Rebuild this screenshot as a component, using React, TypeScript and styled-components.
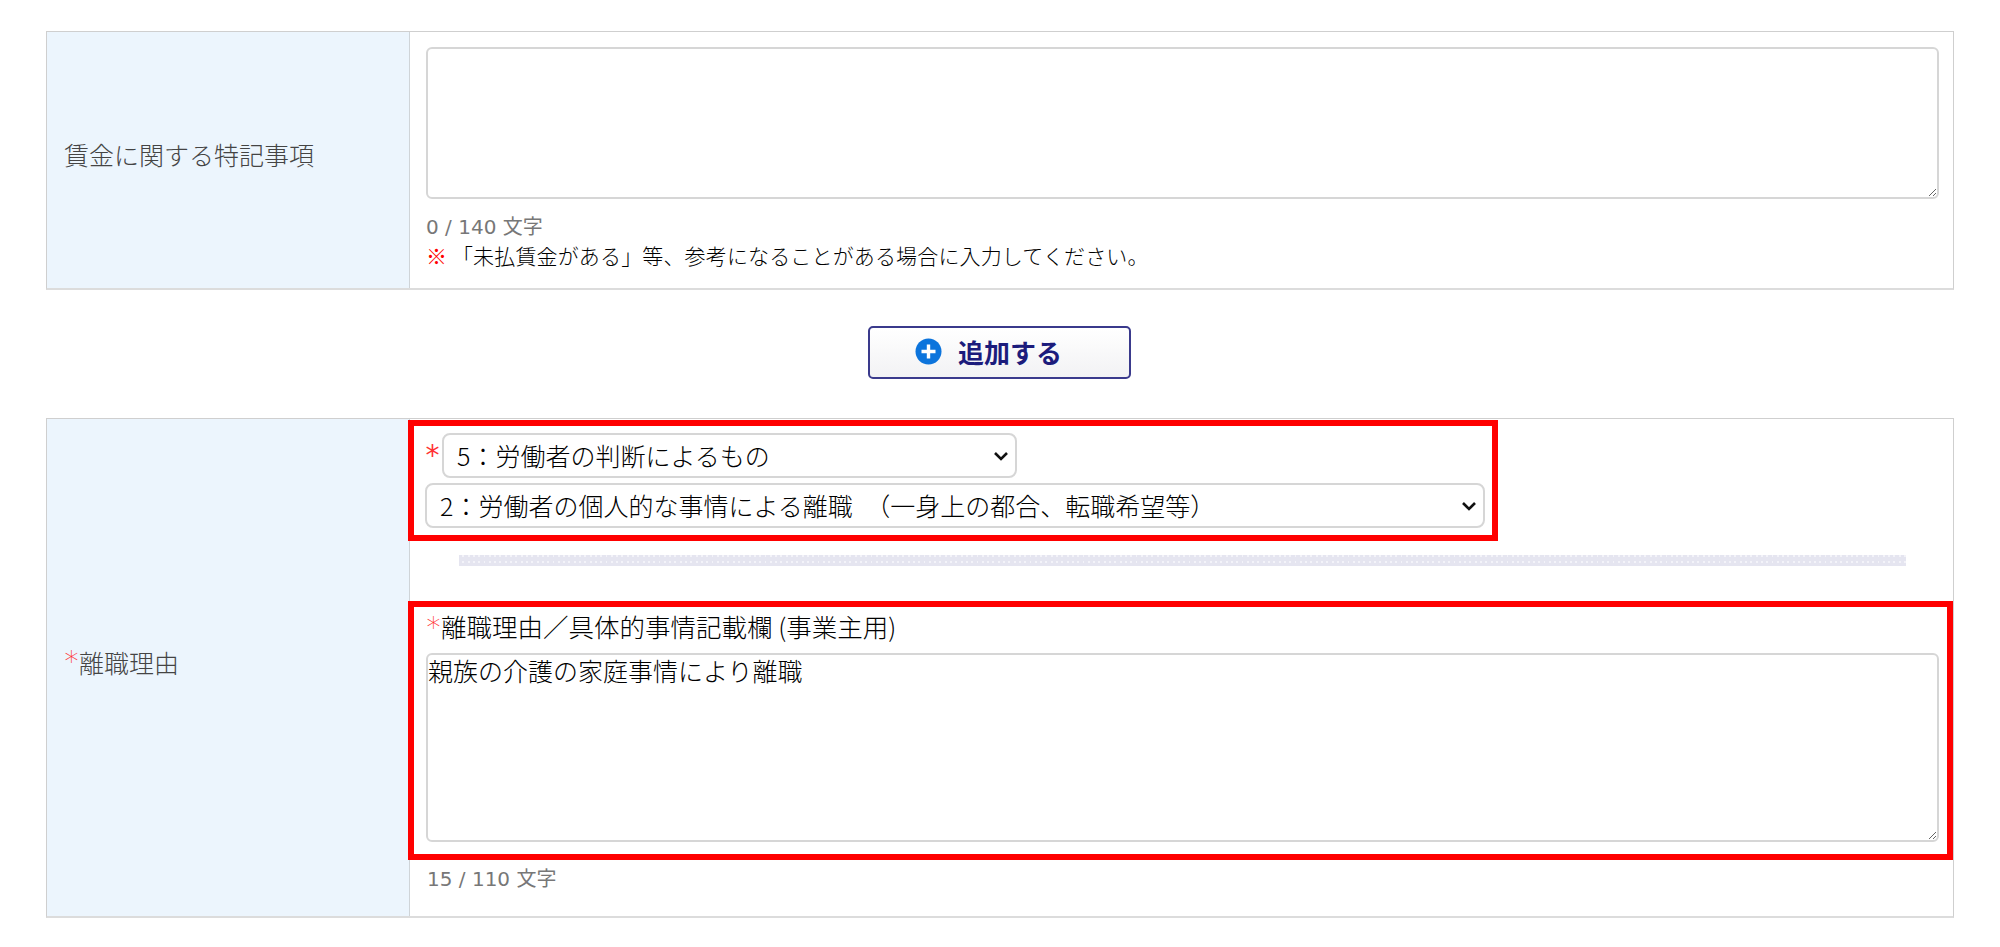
import React from "react";
import styled, { createGlobalStyle } from "styled-components";

const FONT = `"Noto Sans CJK JP", "Noto Sans", sans-serif`;

const CHEVRON =
  "data:image/svg+xml,%3Csvg xmlns='http://www.w3.org/2000/svg' width='16' height='12' viewBox='0 0 16 12'%3E%3Cpath d='M2 3l6 6 6-6' fill='none' stroke='%23111' stroke-width='2.6'/%3E%3C/svg%3E";

const GlobalStyle = createGlobalStyle`
  html, body {
    margin: 0;
    padding: 0;
    background: #fff;
    font-family: ${FONT};
  }
`;

const Page = styled.div`
  padding: 31px 46px 0;
  height: 916px;
`;

const FormTable = styled.div<{ $height: number }>`
  display: grid;
  grid-template-columns: 363px 1fr;
  height: ${(props) => props.$height}px;
  box-sizing: border-box;
  border: 1px solid #cfcfcf;
  border-bottom: 2px solid #dcdcdc;
`;

const HeadCell = styled.div`
  display: flex;
  align-items: center;
  padding: 0 0 12px 17px;
  background-color: #ecf5fd;
  border-right: 1px solid #cfd4d8;
  color: #444;
  font-size: 25px;
  font-weight: 300;
`;

const BodyCell = styled.div<{ $flush?: boolean }>`
  padding: ${(props) => (props.$flush ? "1px 0 0" : "15px 14px 0 16px")};
  min-width: 0;
`;

const TextBox = styled.textarea<{ $height: number }>`
  display: block;
  width: 100%;
  height: ${(props) => props.$height}px;
  box-sizing: border-box;
  margin: 0;
  padding: 0;
  border: 2px solid #d6d6d6;
  border-radius: 6px;
  background: #fff;
  color: #000;
  font-family: ${FONT};
  font-size: 25px;
  font-weight: 300;
  line-height: 30px;
  outline: none;
`;

const Counter = styled.div<{ $top: number; $left?: number }>`
  margin-top: ${(props) => props.$top}px;
  margin-left: ${(props) => props.$left ?? 0}px;
  color: #777;
  font-family: "DejaVu Sans", ${FONT};
  font-size: 20px;
  line-height: 26px;
`;

const Note = styled.div`
  margin-top: 0;
  color: #000;
  font-size: 21px;
  font-weight: 300;
  letter-spacing: 0.15px;
  line-height: 30px;
`;

const NoteMark = styled.span`
  color: #f00;
  font-weight: 900;
`;

const ButtonRow = styled.div`
  display: flex;
  justify-content: center;
  margin: 36px 2px 39px 0;
`;

const AddButton = styled.button`
  display: flex;
  align-items: center;
  justify-content: center;
  gap: 16px;
  width: 263px;
  height: 53px;
  padding: 0 21px 2px 0;
  border: 2px solid #3a3a8c;
  border-radius: 5px;
  background: linear-gradient(#ffffff, #f2f2f4);
  color: #1c1c7c;
  font-family: ${FONT};
  font-size: 26px;
  font-weight: 700;
`;

const RedBox = styled.div<{ $width?: number }>`
  box-sizing: border-box;
  width: ${(props) => (props.$width ? `${props.$width}px` : "auto")};
  margin-left: -2px;
  border: 6px solid #f00;
`;

const SelectStack = styled.div`
  display: flex;
  flex-direction: column;
  gap: 5px;
  padding: 7px 7px 7px 11px;
`;

const SelectRow = styled.div`
  display: flex;
  align-items: center;
  gap: 2px;
`;

const Star = styled.span`
  display: inline-block;
  width: 15px;
  color: #f33;
  font-family: "DejaVu Sans", sans-serif;
  font-size: 28px;
  line-height: 1;
  text-align: center;
`;

const Select = styled.select<{ $width: string }>`
  display: block;
  width: ${(props) => props.$width};
  height: 45px;
  box-sizing: border-box;
  margin: 0;
  padding: 0 2px 2px 13px;
  border: 2px solid #d6d6d6;
  border-radius: 8px;
  appearance: none;
  background: #fff url("${CHEVRON}") no-repeat right 6px center;
  color: #000;
  font-family: ${FONT};
  font-size: 25px;
  font-weight: 300;
  outline: none;
`;

const Divider = styled.div`
  height: 11px;
  margin: 14px 47px 35px 49px;
  background-color: #f3f3f9;
  background-image: repeating-linear-gradient(
      90deg,
      #e5e5f0 0 3.4px,
      transparent 3.4px 5.3px
    ),
    repeating-linear-gradient(0deg, #e5e5f0 0 3.5px, transparent 3.5px 5.5px);
`;

const ReasonBody = styled.div`
  padding: 0 8px 12px 12px;
`;

const ReasonLabel = styled.div`
  height: 40px;
  margin-bottom: 6px;
  color: #000;
  font-size: 25.5px;
  font-weight: 300;
  line-height: 38px;
`;

const PlusIcon = () => (
  <svg width="27" height="27" viewBox="0 0 27 27" aria-hidden="true">
    <circle cx="13.5" cy="13.5" r="13" fill="#0c74dc" />
    <path d="M13.5 6.5v14M6.5 13.5h14" stroke="#fff" strokeWidth="3.4" />
  </svg>
);

export default function App() {
  return (
    <>
      <GlobalStyle />
      <Page>
        <FormTable $height={259}>
          <HeadCell>賃金に関する特記事項</HeadCell>
          <BodyCell>
            <TextBox $height={152} defaultValue="" />
            <Counter $top={15}>0 / 140 文字</Counter>
            <Note>
              <NoteMark>※</NoteMark> 「未払賃金がある」等、参考になることがある場合に入力してください。
            </Note>
          </BodyCell>
        </FormTable>

        <ButtonRow>
          <AddButton type="button">
            <PlusIcon />
            追加する
          </AddButton>
        </ButtonRow>

        <FormTable $height={500}>
          <HeadCell>
            <Star>*</Star>離職理由
          </HeadCell>
          <BodyCell $flush>
            <RedBox $width={1090}>
              <SelectStack>
                <SelectRow>
                  <Star>*</Star>
                  <Select $width="575px" defaultValue="5">
                    <option value="5">5：労働者の判断によるもの</option>
                  </Select>
                </SelectRow>
                <Select $width="100%" defaultValue="2">
                  <option value="2">2：労働者の個人的な事情による離職　（一身上の都合、転職希望等）</option>
                </Select>
              </SelectStack>
            </RedBox>
            <Divider />
            <RedBox>
              <ReasonBody>
                <ReasonLabel>
                  <Star>*</Star>離職理由／具体的事情記載欄 (事業主用)
                </ReasonLabel>
                <TextBox $height={189} defaultValue="親族の介護の家庭事情により離職" />
              </ReasonBody>
            </RedBox>
            <Counter $top={6} $left={17}>
              15 / 110 文字
            </Counter>
          </BodyCell>
        </FormTable>
      </Page>
    </>
  );
}
